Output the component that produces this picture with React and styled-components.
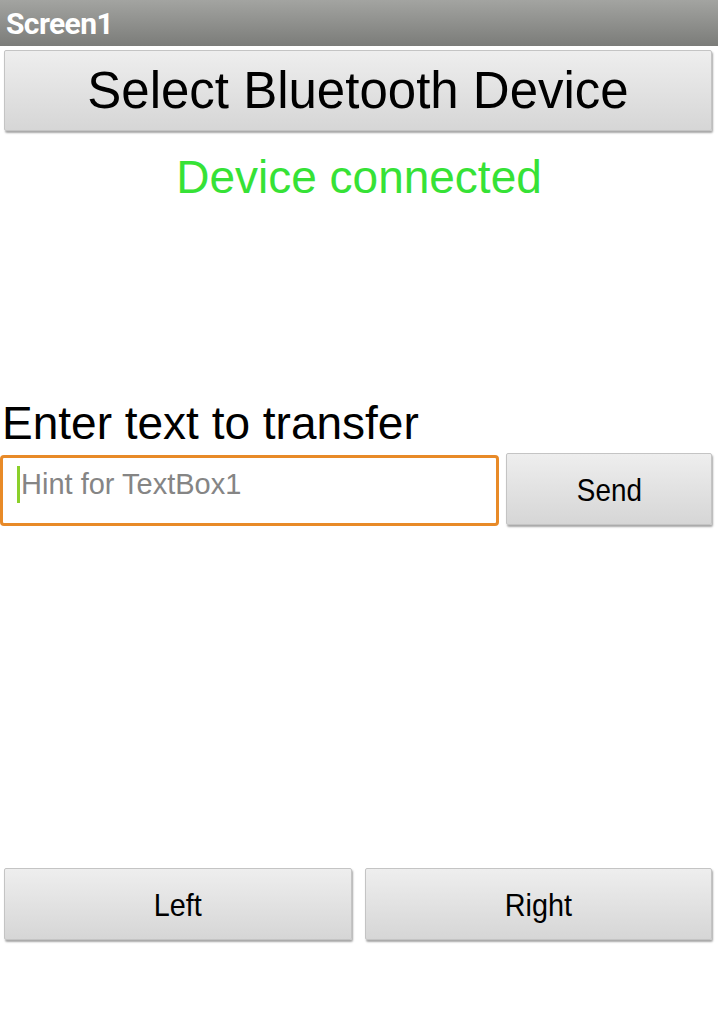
import React from 'react'
import styled, { createGlobalStyle } from 'styled-components'

const Global = createGlobalStyle`
  html, body { margin: 0; padding: 0; background: #fff; }
  body { font-family: "Liberation Sans", Arial, sans-serif; }
`

const Screen = styled.div`
  width: 718px;
  height: 1017px;
  display: flex;
  flex-direction: column;
  background: #fff;
  overflow: hidden;
`
const TitleBar = styled.div`
  height: 46px;
  display: flex;
  align-items: center;
  padding-left: 6px;
  background: linear-gradient(#a3a4a1, #7b7c79);
  color: #fff;
  font-family: Roboto, "Liberation Sans", sans-serif;
  font-weight: 700;
  font-size: 30px;
  letter-spacing: -0.6px;
`
const Button = styled.button`
  display: flex;
  align-items: center;
  justify-content: center;
  height: ${p => p.h || 72}px;
  font-family: "Liberation Sans", Arial, sans-serif;
  font-size: ${p => p.size || 32}px;
  color: #000;
  border: 1px solid #c4c4c4;
  border-radius: 2px;
  background: linear-gradient(#eeeeee, #d6d6d6);
  box-shadow: 1px 2px 2px rgba(0,0,0,0.35);
  padding: 2px 0 0;
`
const ButtonText = styled.span`
  display: inline-block;
  transform: scaleX(${p => p.squeeze || 1});
`
const SelectButton = styled(Button)`
  margin: 4px 6px 0 4px;
  padding: 0;
`
const Status = styled.div`
  margin-top: 19px;
  text-align: center;
  color: #36e236;
  font-size: 46px;
  line-height: 54px;
`
const Label = styled.div`
  margin-top: 192px;
  padding-left: 2px;
  font-size: 46px;
  line-height: 54px;
  color: #000;
`
const InputRow = styled.div`
  margin-top: 3px;
  display: flex;
  gap: 7px;
  padding-right: 6px;
  align-items: flex-start;
`
const TextBox = styled.div`
  width: 499px;
  height: 71px;
  box-sizing: border-box;
  border: 3px solid #e88a28;
  border-radius: 4px;
  display: flex;
  align-items: center;
  padding: 0 0 12px 14px;
  font-size: 29px;
  color: #858585;
  margin-top: 2px;
`
const Cursor = styled.span`
  width: 3px;
  height: 37px;
  background: #8bd02a;
  margin-right: 1px;
`
const SendButton = styled(Button)`
  flex: 1;
`
const BottomRow = styled.div`
  margin-top: auto;
  margin-bottom: 77px;
  display: flex;
  gap: 13px;
  padding: 0 6px 0 4px;
`
const HalfButton = styled(Button)`
  flex: 1;
`

export default function App() {
  return (
    <Screen>
      <Global />
      <TitleBar>Screen1</TitleBar>
      <SelectButton h={81} size={51}>Select Bluetooth Device</SelectButton>
      <Status>Device connected</Status>
      <Label>Enter text to transfer</Label>
      <InputRow>
        <TextBox><Cursor />Hint for TextBox1</TextBox>
        <SendButton h={72}><ButtonText squeeze={0.87}>Send</ButtonText></SendButton>
      </InputRow>
      <BottomRow>
        <HalfButton h={72}><ButtonText squeeze={0.9}>Left</ButtonText></HalfButton>
        <HalfButton h={72}><ButtonText squeeze={0.9}>Right</ButtonText></HalfButton>
      </BottomRow>
    </Screen>
  )
}
